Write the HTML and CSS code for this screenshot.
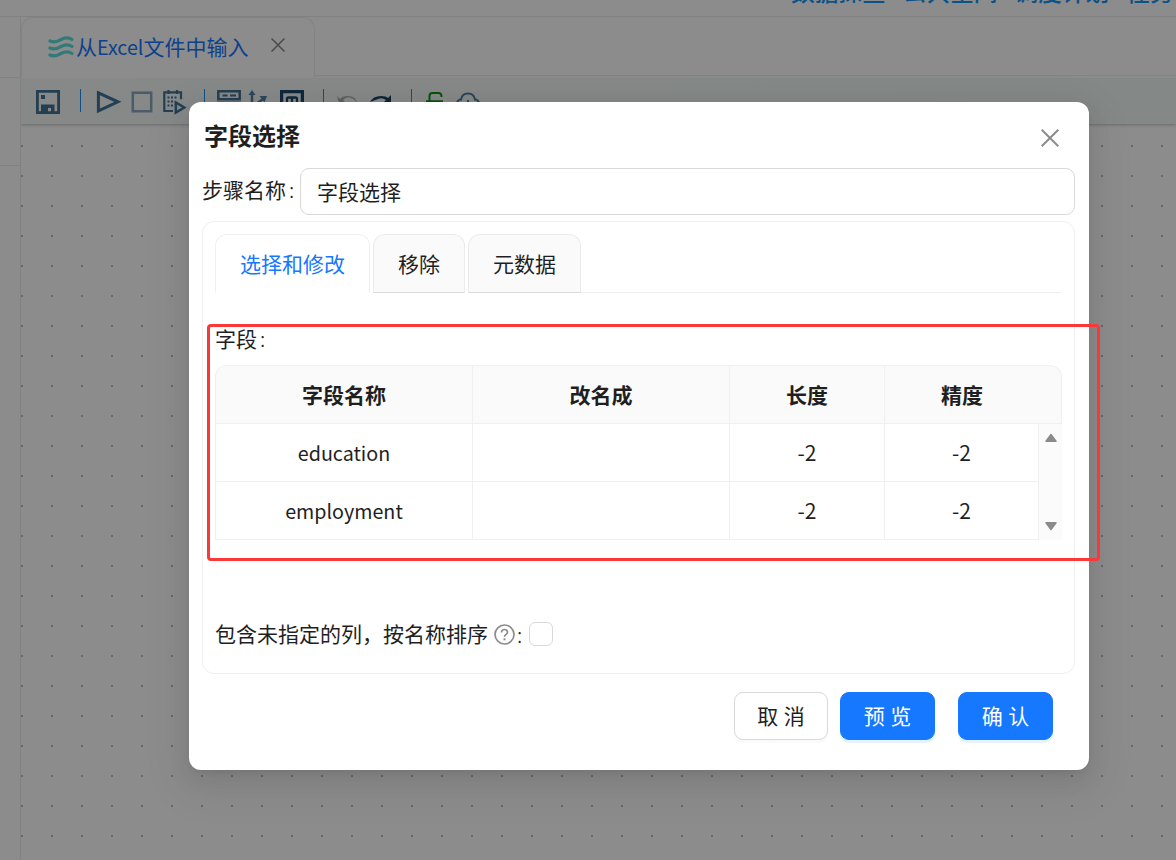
FILE: index.html
```html
<!DOCTYPE html>
<html lang="zh-CN">
<head>
<meta charset="utf-8">
<title>字段选择</title>
<link rel="stylesheet" href="styles.css">
</head>
<body>
<div class="app">
  <header class="topbar">
    <nav class="topnav"><a>数据探查</a><a>公共空间</a><a>调度计划</a><a>任务</a></nav>
  </header>
  <div class="workspace">
    <aside class="sidebar"><div class="side-head"></div><div class="side-block"></div></aside>
    <main class="editor">
      <div class="file-tabs">
        <div class="file-tab">
          <svg class="wave" width="26" height="22" viewBox="0 0 26 22" fill="none" stroke="#2f7b79" stroke-width="3.200" stroke-linecap="round"><path d="M2 5C7 7.500 10 5 13 3.500S20 1 24 3.500M2 12C7 14.500 10 12 13 10.500S20 8 24 10.500M2 19C7 21.500 10 19 13 17.500S20 15 24 17.500"/></svg>
          <span class="file-name">从<span class="latin">Excel</span>文件中输入</span>
          <svg class="tab-close" width="14" height="14" viewBox="0 0 14 14" stroke="#4a4a4a" stroke-width="1.500"><path d="M.5.5l13 13M13.500.5l-13 13"/></svg>
        </div>
        <div class="file-tabs-rest"></div>
      </div>
      <div class="toolbar">
        <svg width="460" height="46" viewBox="21 78 460 46" fill="none" stroke="#253f52" stroke-width="2.800">
          <path d="M37.400 91.400h21.200v21.200H37.400z"/><path d="M41 113v-8.500h13.500V113H51v-5h-3v5z" fill="#253f52" stroke="none"/><path d="M41 95h4v4h-4z" fill="#253f52" stroke="none"/>
          <path d="M80.500 89v23M204.500 89v23M323.500 89v23M411.500 89v23" stroke="#104f86" stroke-width="1"/>
          <path d="M98.400 92.800v18l19.500-9z" stroke-width="3"/>
          <path d="M132.800 92.800h18.400v18.400h-18.400z" stroke="#4d5b68" stroke-width="2.500"/>
          <path d="M173 111h-8.700V92.300h16.700v7M168.500 90v4M177 90v4" stroke-width="2.200"/><path d="M167.500 97.500h10M167.500 101.500h7M167.500 105.500h7" stroke-dasharray="2 1.500" stroke-width="2"/><path d="M175.800 102.500v10l8.500-5z" stroke-width="2.500"/>
          <path d="M218.300 91.300h21.400v8h-21.400z" stroke-width="2.500"/><path d="M222.500 95.500h5M230 95.500h6" stroke-width="2"/><path d="M217 102h24" stroke-width="2" opacity=".4"/>
          <path d="M252 108V93" stroke="#2d475b" stroke-width="2.500"/><path d="M248.500 95l3.500-5 3.500 5z" fill="#2d475b" stroke="none"/><path d="M255 105l8-6" stroke="#2d475b" stroke-width="2.500"/><path d="M259.500 96h7.500l-2.500 6.500z" fill="#2d475b" stroke="none"/>
          <path d="M281.600 108V91.600h20.800V108" stroke="#10283b" stroke-width="3.200"/><path d="M287 105v-6q0-1.500 1.500-1.500h7q1.500 0 1.500 1.500v6M292 98v7" stroke="#10283b" stroke-width="2.300"/>
          <path d="M337 96l2 7h7l-3-3q4-4 8-2 4 1 6 5-1-7-9-7-6 0-8 3z" fill="#5c6060" stroke="none"/>
          <path d="M391 95v8h-8l3-3q-4-3-8-1l-8 3q3-6 11-6 5 0 7 2z" fill="#0c2639" stroke="none"/>
          <path d="M426 101.300h17M429.500 101v-5q0-3 3-3h6q3 0 3 4" stroke="#09530c" stroke-width="2"/>
          <path d="M457 104q0-4 4-4.500 1-6 7-6t7 6q4 .5 4 4.500M468 100v6" stroke="#29455b" stroke-width="2"/>
        </svg>
      </div>
      <div class="canvas"></div>
    </main>
  </div>
</div>

<section class="modal">
  <header class="modal-head">
    <h1>字段选择</h1>
    <svg width="18" height="18" viewBox="0 0 18 18" stroke="#8c8c8c" stroke-width="2"><path d="M.7.7l16.600 16.600M17.300.7L.7 17.300"/></svg>
  </header>
  <div class="name-row"><label>步骤名称<i>:</i></label><div class="input">字段选择</div></div>
  <div class="panel">
    <div class="tabs">
      <div class="tab tab-active">选择和修改</div><div class="tab">移除</div><div class="tab">元数据</div><div class="tabs-rest"></div>
    </div>
    <div class="field-label">字段<i>:</i></div>
    <div class="table">
      <div class="row head"><div>字段名称</div><div>改名成</div><div>长度</div><div>精度</div><div class="gutter"></div></div>
      <div class="body">
        <div class="rows">
          <div class="row"><div class="latin">education</div><div></div><div>-2</div><div>-2</div></div>
          <div class="row"><div class="latin">employment</div><div></div><div>-2</div><div>-2</div></div>
        </div>
        <div class="scroll">
          <svg width="12" height="10" viewBox="0 0 12 10"><path d="M6 1.500L11 8.200H1z" fill="#8b8b8b" stroke="#8b8b8b" stroke-width="1.500" stroke-linejoin="round"/></svg>
          <svg width="12" height="10" viewBox="0 0 12 10"><path d="M6 8.500L1 1.800h10z" fill="#8b8b8b" stroke="#8b8b8b" stroke-width="1.500" stroke-linejoin="round"/></svg>
        </div>
      </div>
    </div>
    <div class="sort-row">
      <span class="sort-text">包含未指定的列，按名称排序</span>
      <svg width="21" height="21" viewBox="0 0 21 21" fill="none" stroke="#8c8c8c" stroke-width="1.700"><circle cx="10.500" cy="10.500" r="9.500"/><path d="M7.500 8.500q0-3 3-3t3 2.700c0 2-3 2.300-3 4.600"/><path d="M10.500 14.300v2" stroke-width="2"/></svg>
      <i>:</i><span class="checkbox"></span>
    </div>
  </div>
  <footer class="actions">
    <button class="btn">取 消</button><button class="btn primary">预 览</button><button class="btn primary confirm">确 认</button>
  </footer>
</section>
<div class="highlight"></div>
</body>
</html>
```
FILE: styles.css
```css
* { box-sizing: border-box; }
body {
  margin: 0;
  width: 1176px;
  height: 860px;
  overflow: hidden;
  background: #8c8c8c;
  color: #1f1f1f;
  font: 21px/30px "Noto Sans CJK SC", "Noto Sans", sans-serif;
}
svg { display: block; flex: none; }
i { font-style: normal; font-weight: 300; }
.latin { font-size: 19.700px; }

.app { height: 860px; display: flex; flex-direction: column; }
.topbar {
  height: 17px;
  flex: none;
  display: flex;
  justify-content: flex-end;
  align-items: flex-end;
  overflow: hidden;
  border-bottom: 1px solid #818181;
}
.topnav { display: flex; gap: 17px; width: 421px; margin: 0 -36px 10px 0; font-size: 23.700px; line-height: 30px; color: #0a5287; font-weight: 500; }
.topnav a { flex: none; }

.workspace { flex: 1; display: flex; min-height: 0; }
.sidebar { width: 21px; border-right: 1px solid #818181; }
.side-head { height: 61px; border-bottom: 1px solid #818181; }
.side-block { height: 88px; border-bottom: 1px solid #818181; }
.editor { flex: 1; display: flex; flex-direction: column; }
.file-tabs { display: flex; height: 61px; flex: none; }
.file-tab {
  width: 294px;
  height: 60px;
  display: flex;
  align-items: center;
  padding-left: 26px;
  border: 1px solid #838383;
  border-bottom: 0;
  border-radius: 12px 12px 0 0;
  color: #0d418c;
}
.wave { margin: -2px 2px 0 0; }
.file-name { margin-top: -3px; white-space: nowrap; }
.tab-close { margin: -5px 0 0 23px; }
.file-tabs-rest { flex: 1; height: 59px; border-bottom: 1px solid #838383; }
.toolbar {
  height: 46px;
  flex: none;
  background: linear-gradient(90deg, #868988, #848887);
  box-shadow: 0 1px 3px #6a6a6a;
  clip-path: inset(0 0 -5px 0);
}
.canvas {
  flex: 1;
  background: url("data:image/svg+xml,%3Csvg xmlns='http://www.w3.org/2000/svg' width='30' height='30'%3E%3Crect width='2' height='2' fill='%23686868'/%3E%3C/svg%3E") 0 21px;
}

.modal {
  position: absolute;
  left: 189px;
  top: 102px;
  width: 900px;
  height: 668px;
  padding: 15px 14px 0 13px;
  background: #fff;
  border-radius: 12px;
  box-shadow: 0 9px 24px rgba(0, 0, 0, .08), 0 4px 9px -5px rgba(0, 0, 0, .12), 0 14px 42px 12px rgba(0, 0, 0, .05);
}
.modal-head { display: flex; justify-content: space-between; height: 51px; padding: 0 16px 0 2px; }
.modal-head h1 { margin: 0; font-size: 24px; line-height: 36px; font-weight: 700; }
.modal-head svg { margin-top: 12px; }
.name-row { display: flex; height: 47px; }
.name-row label { width: 98px; padding-top: 6px; white-space: nowrap; }
.name-row label i, .field-label i { margin-left: 3px; }
.input { flex: 1; border: 1px solid #d9d9d9; border-radius: 9px; padding: 7px 16px; }
.panel {
  height: 453px;
  margin-top: 6px;
  padding: 12px;
  border: 1px solid #f0f0f0;
  border-radius: 12px;
}
.tabs { display: flex; height: 59px; }
.tab {
  margin-right: 3px;
  padding: 13px 24px;
  border: 1px solid #ebebeb;
  border-bottom-color: #d9d9d9;
  border-radius: 12px 12px 0 0;
  background: #fafafa;
  white-space: nowrap;
}
.tab-active { color: #1677ff; background: #fff; border-color: #f0f0f0; border-bottom-color: #fff; }
.tabs-rest { flex: 1; margin-left: -3px; border-bottom: 1px solid #f0f0f0; }
.field-label { height: 72px; padding-top: 30px; }
.table { width: 847px; height: 175px; }
.row { display: grid; grid-template-columns: 257px 257px 155px 154px; height: 58px; }
.row > div { height: 58px; border-right: 1px solid #f0f0f0; border-bottom: 1px solid #f0f0f0; text-align: center; line-height: 57px; }
.head {
  grid-template-columns: 257px 257px 155px 154px 22px;
  height: 59px;
  border: 1px solid #f0f0f0;
  border-bottom: 0;
  border-radius: 12px 12px 0 0;
  background: #fafafa;
  font-weight: 700;
}
.head > div:nth-child(4), .head > .gutter { border-right: 0; }
.head > div { line-height: 56px; }
.body { display: flex; height: 116px; }
.rows { width: 824px; border-left: 1px solid #f0f0f0; }
.scroll { flex: 1; background: #fbfbfb; display: flex; flex-direction: column; justify-content: space-between; align-items: center; padding: 9px 0 9px; }
.sort-row { display: flex; align-items: center; height: 30px; margin-top: 79px; }
.sort-text { margin-top: -2px; }
.sort-row svg { margin-left: 6px; }
.sort-row i { margin: -1px 0 0 2px; width: 7px; }
.checkbox { width: 24px; height: 24px; margin-left: 5px; border: 1px solid #d9d9d9; border-radius: 6px; }
.actions { display: flex; justify-content: flex-end; margin-top: 18px; padding-right: 22px; }
.btn {
  width: 94px;
  height: 48px;
  padding: 0 0 2px;
  border: 1px solid #d9d9d9;
  border-radius: 9px;
  background: #fff;
  color: #1f1f1f;
  font: inherit;
  word-spacing: 1px;
  box-shadow: 0 3px 0 rgba(0, 0, 0, .02);
}
.primary { width: 95px; margin-left: 12px; background: #1677ff; border-color: #1677ff; color: #fff; box-shadow: 0 3px 0 rgba(5, 145, 255, .1); }
.confirm { margin-left: 23px; }
.highlight {
  position: absolute;
  left: 207px;
  top: 324px;
  width: 893px;
  height: 237px;
  border: 3px solid #fb3838;
  border-radius: 4px;
}
```
